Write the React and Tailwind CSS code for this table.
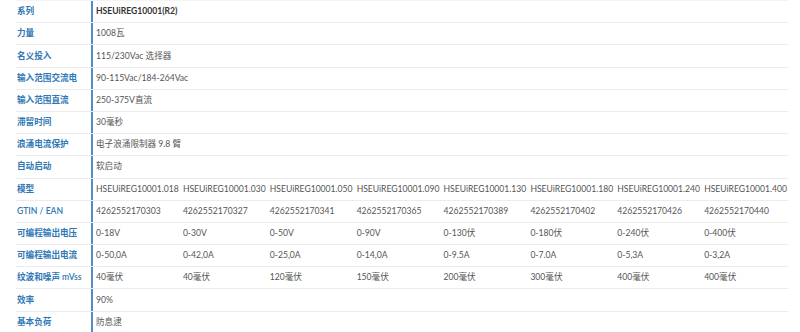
import React from "react";

// single-value spec rows
const top = [
  ["系列", "HSEUiREG10001(R2)", true],
  ["力量", "1008瓦"],
  ["名义投入", "115/230Vac 选择器"],
  ["输入范围交流电", "90-115Vac/184-264Vac"],
  ["输入范围直流", "250-375V直流"],
  ["滞留时间", "30毫秒"],
  ["浪涌电流保护", "电子浪涌限制器 9.8 臂"],
  ["自动启动", "软启动"],
];

// per-model rows
const models = [
  ["模型", ["HSEUiREG10001.018", "HSEUiREG10001.030", "HSEUiREG10001.050", "HSEUiREG10001.090", "HSEUiREG10001.130", "HSEUiREG10001.180", "HSEUiREG10001.240", "HSEUiREG10001.400"]],
  ["GTIN / EAN", ["4262552170303", "4262552170327", "4262552170341", "4262552170365", "4262552170389", "4262552170402", "4262552170426", "4262552170440"]],
  ["可编程输出电压", ["0-18V", "0-30V", "0-50V", "0-90V", "0-130伏", "0-180伏", "0-240伏", "0-400伏"]],
  ["可编程输出电流", ["0-50,0A", "0-42,0A", "0-25,0A", "0-14,0A", "0-9.5A", "0-7.0A", "0-5,3A", "0-3,2A"]],
  ["纹波和噪声 mVss", ["40毫伏", "40毫伏", "120毫伏", "150毫伏", "200毫伏", "300毫伏", "400毫伏", "400毫伏"]],
];

const bottom = [
  ["效率", "90%"],
  ["基本负荷", "防息逮"],
];

function Label({ children }) {
  return (
    <div className="flex items-center pl-px border-r-2 border-[#4f8fc6] text-[#2f78b5] font-semibold whitespace-nowrap">
      {children}
    </div>
  );
}

function Row({ children }) {
  return (
    <div className="grid grid-cols-[77px_repeat(8,1fr)] h-[22.2px] border-b border-[#ececec]">
      {children}
    </div>
  );
}

function Single({ label, value, bold }) {
  return (
    <Row>
      <Label>{label}</Label>
      <div className={"col-span-8 flex items-center pl-[3px] " + (bold ? "font-bold text-[#333]" : "text-[#555]")}>
        {value}
      </div>
    </Row>
  );
}

export default function App() {
  return (
    <div
      className="w-[800px] h-[332px] bg-white overflow-hidden text-[8.6px]"
      style={{ fontFamily: 'Lato, "Noto Sans CJK SC", sans-serif' }}
    >
      <div className="ml-[16px] w-[772px] border-t border-[#f4f4f4]">
        {top.map(([l, v, b]) => (
          <Single key={l} label={l} value={v} bold={b} />
        ))}
        {models.map(([l, vals]) => (
          <Row key={l}>
            <Label>{l}</Label>
            {vals.map((v, i) => (
              <div key={i} className="flex items-center pl-[3px] text-[#555] whitespace-nowrap">
                {v}
              </div>
            ))}
          </Row>
        ))}
        {bottom.map(([l, v]) => (
          <Single key={l} label={l} value={v} />
        ))}
      </div>
    </div>
  );
}
